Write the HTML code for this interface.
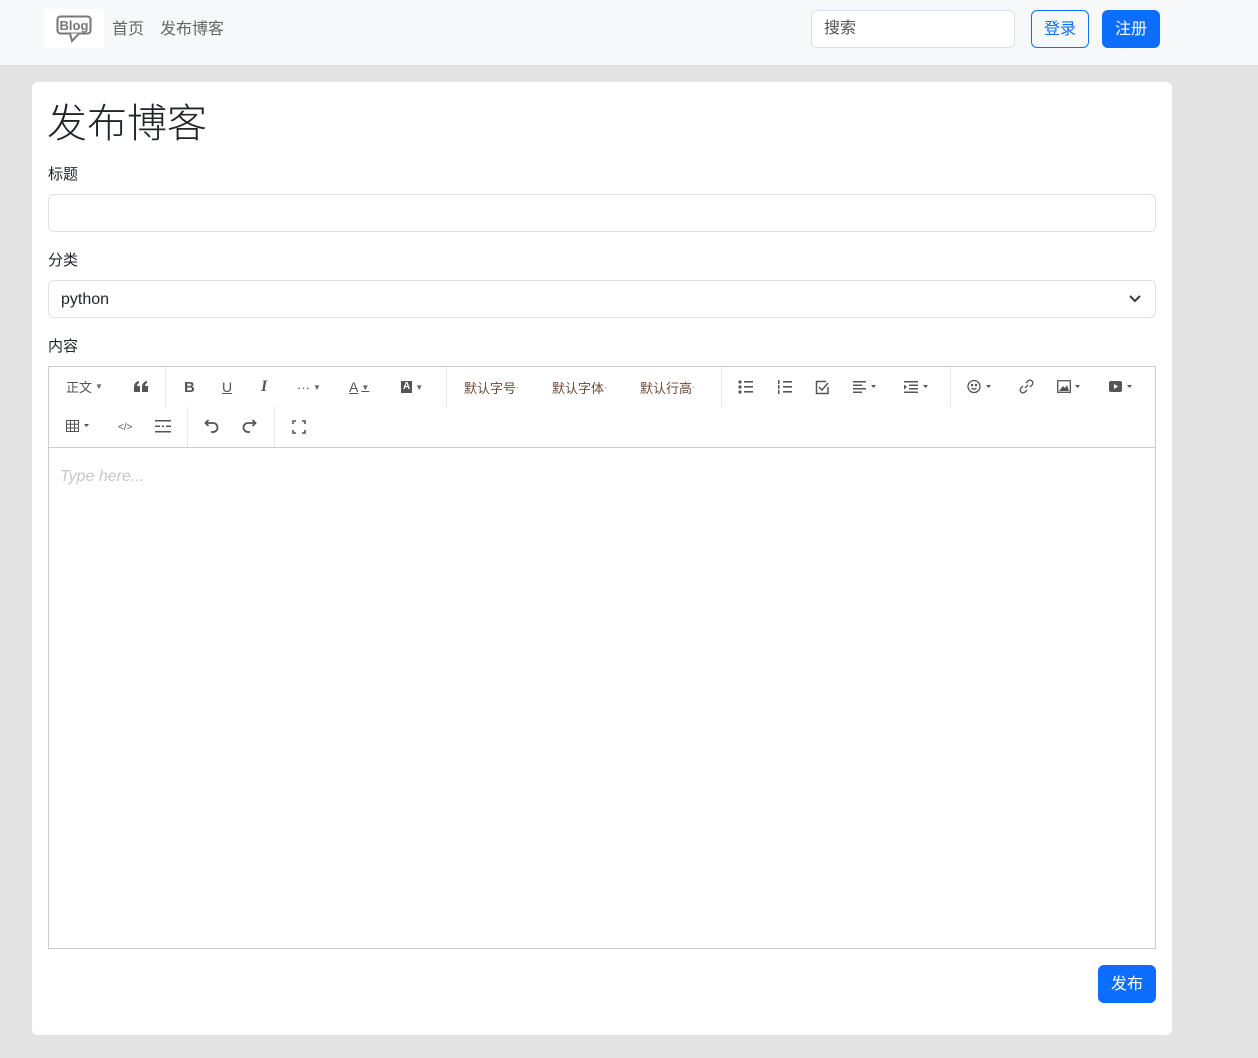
<!DOCTYPE html>
<html><head><meta charset="utf-8">
<style>
*{box-sizing:border-box;margin:0;padding:0}
body{width:1258px;height:1058px;background:#e4e4e4;font-family:"Liberation Sans","Noto Sans CJK SC",sans-serif;color:#212529;position:relative;overflow:hidden}
.abs{position:absolute}
.nav{left:0;top:0;width:1258px;height:66px;background:#f7f8fa;border-bottom:1px solid #dcdcdc}
.card{left:32px;top:82px;width:1140px;height:953px;background:#fff;border-radius:6px}
.input{background:#fff;border:1px solid #dee2e6;border-radius:6px}
.tb{font-size:13px;color:#555;display:flex;align-items:center;justify-content:center}
.sep{width:1px;background:#e8e8e8}
.car{font-size:8px;margin-left:3px;color:#666}
</style></head><body>
<div class="abs nav"></div>
<div class="abs" style="left:44px;top:9px;width:60px;height:39px;background:#fff"></div>
<svg class="abs" style="left:56px;top:15px" width="36" height="28" viewBox="0 0 36 28">
<rect x="1.5" y="1.5" width="33" height="17" rx="3" fill="#fff" stroke="#777" stroke-width="2"/>
<path d="M14 18.5 L16 26 L23 18.5" fill="#fff" stroke="#777" stroke-width="2"/>
<text x="18" y="15" text-anchor="middle" font-family="Liberation Sans" font-weight="bold" font-size="13" fill="#777">Blog</text>
</svg>
<div class="abs" style="left:112px;top:18px;font-size:16px;line-height:24px;color:#666">首页</div>
<div class="abs" style="left:160px;top:18px;font-size:16px;line-height:24px;color:#666">发布博客</div>
<div class="abs input" style="left:811px;top:10px;width:204px;height:38px;padding:0 12px;line-height:36px;font-size:16px;color:#555">搜索</div>
<div class="abs" style="left:1031px;top:10px;width:58px;height:38px;border:1px solid #0d6efd;border-radius:6px;color:#0d6efd;font-size:16px;text-align:center;line-height:38px">登录</div>
<div class="abs" style="left:1102px;top:10px;width:58px;height:38px;background:#0d6efd;border-radius:6px;color:#fff;font-size:16px;text-align:center;line-height:40px">注册</div>

<div class="abs card"></div>
<div class="abs" style="left:47px;top:98px;font-size:40px;line-height:52px;font-weight:300">发布博客</div>
<div class="abs" style="left:48px;top:164px;font-size:15px;line-height:22px">标题</div>
<div class="abs input" style="left:48px;top:194px;width:1108px;height:38px"></div>
<div class="abs" style="left:48px;top:250px;font-size:15px;line-height:22px">分类</div>
<div class="abs input" style="left:48px;top:280px;width:1108px;height:38px;padding:0 12px;line-height:38px;font-size:16px">python</div>
<svg class="abs" style="left:1128px;top:294px" width="14" height="10" viewBox="0 0 14 10"><path d="M2 2 L7 7 L12 2" fill="none" stroke="#343a40" stroke-width="2"/></svg>
<div class="abs" style="left:48px;top:336px;font-size:15px;line-height:22px">内容</div>

<div class="abs" style="left:48px;top:366px;width:1108px;height:583px;border:1px solid #ccc;background:#fff"></div>
<div class="abs" style="left:49px;top:447px;width:1106px;height:1px;background:#ccc"></div>
<div class="abs" style="left:60px;top:467px;font-size:16px;line-height:20px;font-style:italic;color:#c8c8c8">Type here...</div>

<div class="abs sep" style="left:165px;top:367px;height:40px"></div>
<div class="abs sep" style="left:446px;top:367px;height:40px"></div>
<div class="abs sep" style="left:721px;top:367px;height:40px"></div>
<div class="abs sep" style="left:950px;top:367px;height:40px"></div>
<div class="abs sep" style="left:187px;top:407px;height:40px"></div>
<div class="abs sep" style="left:274px;top:407px;height:40px"></div>

<div class="abs tb" style="left:66px;top:375px;height:22px">正文<span class="car">▼</span></div>
<svg class="abs" style="left:134px;top:381px" width="14" height="11" viewBox="0 0 14 11" fill="#555"><path d="M0 11V6Q0 1 5 0V2Q3 3 3 5H6V11Z"/><path d="M8 11V6Q8 1 13 0V2Q11 3 11 5H14V11Z"/></svg>
<div class="abs tb" style="left:184px;top:376px;height:22px;font-weight:bold;font-size:15px">B</div>
<div class="abs tb" style="left:222px;top:376px;height:22px;font-size:14px;text-decoration:underline">U</div>
<div class="abs tb" style="left:261px;top:376px;height:22px;font-size:16px;font-style:italic;font-family:'Liberation Serif',serif;font-weight:bold">I</div>
<div class="abs tb" style="left:297px;top:376px;height:22px">···<span class="car">▼</span></div>
<div class="abs tb" style="left:349px;top:376px;height:22px;font-size:14px;text-decoration:underline">A<span class="car">▼</span></div>
<div class="abs tb" style="left:401px;top:376px;height:22px"><span style="background:#555;color:#fff;font-size:10px;font-weight:bold;padding:0 2px;line-height:12px">A</span><span class="car">▼</span></div>
<div class="abs tb" style="left:464px;top:376px;height:22px;color:#6a4b3a">默认字号<span style="font-size:8px">·</span></div>
<div class="abs tb" style="left:552px;top:376px;height:22px;color:#6a4b3a">默认字体<span style="font-size:8px">·</span></div>
<div class="abs tb" style="left:640px;top:376px;height:22px;color:#6a4b3a">默认行高<span style="font-size:8px">·</span></div>
<svg class="abs" style="left:738px;top:380px" width="16" height="14" viewBox="0 0 16 14" fill="#555"><circle cx="2" cy="2" r="1.6"/><circle cx="2" cy="7" r="1.6"/><circle cx="2" cy="12" r="1.6"/><rect x="6" y="1" width="9" height="1.6"/><rect x="6" y="6" width="9" height="1.6"/><rect x="6" y="11" width="9" height="1.6"/></svg>
<svg class="abs" style="left:777px;top:380px" width="16" height="14" viewBox="0 0 16 14" fill="#555"><rect x="1" y="0" width="1.5" height="4"/><rect x="1" y="5" width="1.5" height="4"/><rect x="1" y="10" width="1.5" height="4"/><rect x="6" y="1" width="9" height="1.6"/><rect x="6" y="6" width="9" height="1.6"/><rect x="6" y="11" width="9" height="1.6"/></svg>
<svg class="abs" style="left:815px;top:380px" width="15" height="15" viewBox="0 0 15 15" fill="none" stroke="#555" stroke-width="1.5"><path d="M13 7 V13.5 H1.5 V1.5 H11"/><path d="M4 7 L7 10 L13 3"/></svg>
<svg class="abs" style="left:853px;top:381px" width="26" height="12" viewBox="0 0 26 12" fill="#555"><rect x="0" y="0" width="13" height="1.5"/><rect x="0" y="3.5" width="9" height="1.5"/><rect x="0" y="7" width="13" height="1.5"/><rect x="0" y="10.5" width="9" height="1.5"/><path d="M18 4 L23 4 L20.5 7Z"/></svg>
<svg class="abs" style="left:904px;top:381px" width="26" height="12" viewBox="0 0 26 12" fill="#555"><rect x="0" y="0" width="14" height="1.5"/><rect x="5" y="3.5" width="9" height="1.5"/><rect x="5" y="7" width="9" height="1.5"/><rect x="0" y="10.5" width="14" height="1.5"/><path d="M0 3.5 L3 6 L0 8.5Z"/><path d="M19 4 L24 4 L21.5 7Z"/></svg>
<svg class="abs" style="left:967px;top:379px" width="26" height="15" viewBox="0 0 26 15" fill="none" stroke="#555" stroke-width="1.3"><circle cx="7" cy="7.5" r="6"/><circle cx="5" cy="6" r=".6" fill="#555"/><circle cx="9" cy="6" r=".6" fill="#555"/><path d="M4.5 9 Q7 11.5 9.5 9"/><path d="M19 6 L24 6 L21.5 9Z" fill="#555" stroke="none"/></svg>
<svg class="abs" style="left:1019px;top:379px" width="15" height="15" viewBox="0 0 15 15" fill="none" stroke="#555" stroke-width="1.3"><path d="M6 9 L9 6"/><path d="M7 4 L9 2 A2.5 2.5 0 0 1 13 6 L11 8"/><path d="M8 11 L6 13 A2.5 2.5 0 0 1 2 9 L4 7"/></svg>
<svg class="abs" style="left:1057px;top:380px" width="26" height="13" viewBox="0 0 26 13"><rect x=".7" y=".7" width="12.6" height="11.6" fill="none" stroke="#555" stroke-width="1.3"/><path d="M2 11 L6 6 L8 8 L10 5 L12 11Z" fill="#555"/><path d="M18 5 L23 5 L20.5 8Z" fill="#555"/></svg>
<svg class="abs" style="left:1109px;top:380px" width="26" height="13" viewBox="0 0 26 13"><rect x="0" y="1" width="13" height="11" rx="2" fill="#555"/><path d="M5 4 L9 6.5 L5 9Z" fill="#fff"/><path d="M18 5 L23 5 L20.5 8Z" fill="#555"/></svg>

<svg class="abs" style="left:66px;top:420px" width="26" height="13" viewBox="0 0 26 13" fill="none" stroke="#555" stroke-width="1"><rect x=".5" y=".5" width="12" height="11"/><path d="M.5 4.2H12.5M.5 8H12.5M4.5 .5V11.5M8.5 .5V11.5"/><path d="M18 4 L23 4 L20.5 7Z" fill="#555" stroke="none"/></svg>
<div class="abs tb" style="left:118px;top:417px;height:20px;font-size:10px">&lt;/&gt;</div>
<svg class="abs" style="left:155px;top:420px" width="16" height="13" viewBox="0 0 16 13" fill="#555"><rect x="0" y="0" width="16" height="1.5"/><rect x="0" y="5.5" width="5" height="1.5"/><rect x="7" y="5.5" width="2" height="1.5"/><rect x="11" y="5.5" width="5" height="1.5"/><rect x="0" y="11" width="16" height="1.5"/></svg>
<svg class="abs" style="left:203px;top:419px" width="16" height="15" viewBox="0 0 16 15" fill="none" stroke="#555" stroke-width="1.8"><path d="M3 4 H10 A4.5 4.5 0 0 1 10 13 H8"/><path d="M5.5 1 L2.5 4 L5.5 7"/></svg>
<svg class="abs" style="left:242px;top:419px" width="16" height="15" viewBox="0 0 16 15" fill="none" stroke="#555" stroke-width="1.8"><path d="M13 4 H6 A4.5 4.5 0 0 0 6 13 H8"/><path d="M10.5 1 L13.5 4 L10.5 7"/></svg>
<svg class="abs" style="left:292px;top:420px" width="14" height="14" viewBox="0 0 14 14" fill="none" stroke="#555" stroke-width="1.6"><path d="M1 4V1H4M10 1H13V4M13 10V13H10M4 13H1V10"/></svg>

<div class="abs" style="left:1098px;top:965px;width:58px;height:38px;background:#0d6efd;border-radius:6px;color:#fff;font-size:16px;text-align:center;line-height:40px">发布</div>
</body></html>
